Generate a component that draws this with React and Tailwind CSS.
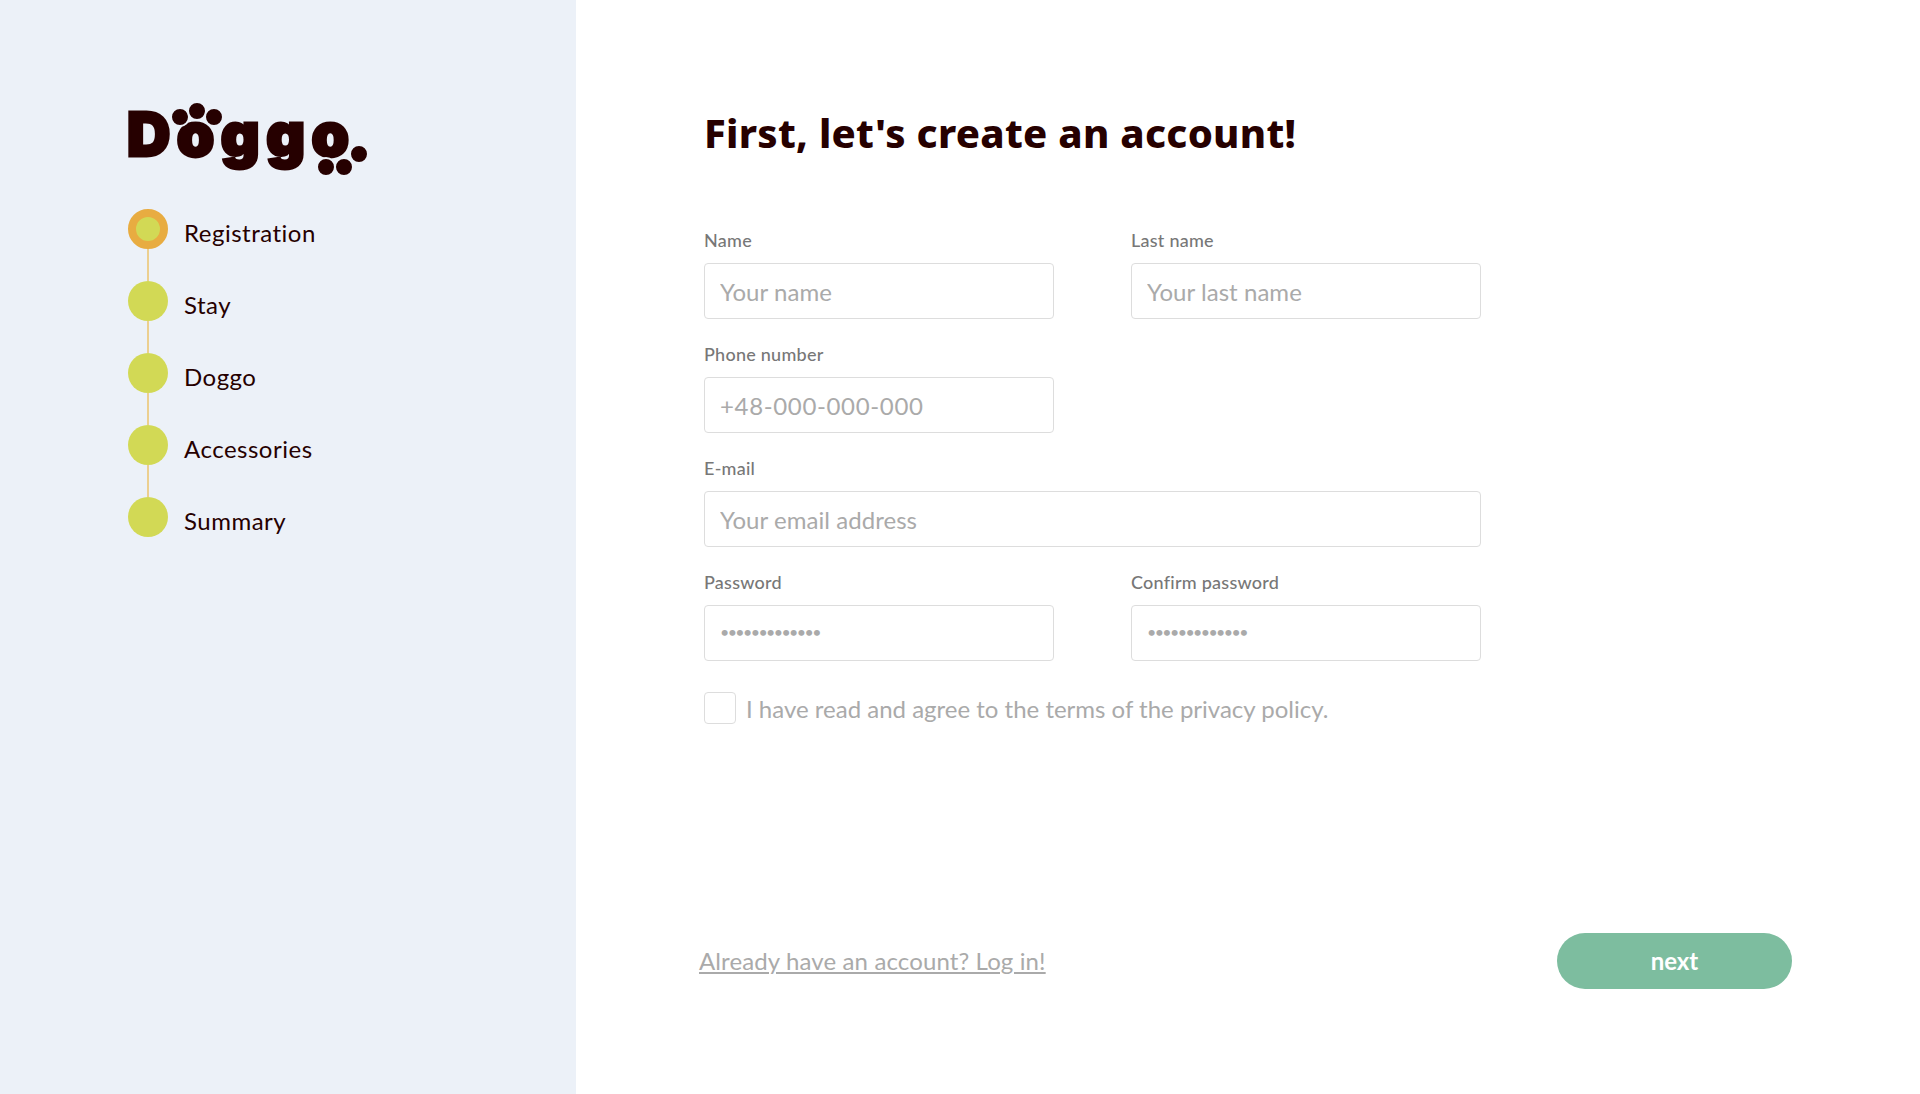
import React from "react";

const steps = ["Registration", "Stay", "Doggo", "Accessories", "Summary"];

const Logo = () => (
  <div className="relative h-[80px] w-[250px]">
    <span className="absolute left-[-1px] top-[-6px] font-['Inter',sans-serif] text-[60px] font-black leading-[80px] tracking-[6.5px] text-[#260000] [-webkit-text-stroke:3px_#260000]">
      Doggo
    </span>
    <svg className="absolute left-0 top-0" width="250" height="80" viewBox="0 0 250 80">
      <g fill="#260000" stroke="#ecf1f8" strokeWidth="2">
        <circle cx="52" cy="17" r="9" />
        <circle cx="69" cy="11" r="9" />
        <circle cx="86" cy="17" r="9" />
        <circle cx="231" cy="54" r="9" />
        <circle cx="198" cy="67" r="9" />
        <circle cx="216" cy="67" r="9" />
      </g>
    </svg>
  </div>
);

const Step = ({ label, active, last }) => (
  <div className="relative flex h-[72px] items-start gap-4">
    {!last && <div className="absolute left-[19px] top-[40px] h-[32px] w-[2px] bg-[#eccf8f]" />}
    <div
      className={
        active
          ? "h-10 w-10 rounded-full border-[8px] border-[#e8ac41] bg-[#d2d955]"
          : "h-10 w-10 rounded-full bg-[#d2d955]"
      }
    />
    <span className="mt-[6px] text-[24px] leading-[36px] tracking-[0.5px] text-[#260000]">{label}</span>
  </div>
);

const Field = ({ label, placeholder, type = "text", dots, phone }) => {
  let inputClass =
    "h-[56px] w-full rounded-[4px] border border-[#dddddd] bg-white px-[15px] text-[24px] tracking-[0.05px] outline-none placeholder:text-[#aaaaaa]";
  if (dots) {
    inputClass =
      "h-[56px] w-full rounded-[4px] border border-[#dddddd] bg-white px-[15px] pb-[4px] text-[16px] tracking-[-1.6px] outline-none placeholder:text-[#aaaaaa]";
  }
  if (phone) {
    inputClass =
      "h-[56px] w-full rounded-[4px] border border-[#dddddd] bg-white px-[15px] text-[24px] tracking-[0.65px] outline-none placeholder:text-[#aaaaaa]";
  }
  return (
    <label className="flex flex-col">
      <span className="mb-[11px] h-[24px] text-[18px] font-medium leading-[24px] tracking-[0.25px] text-[#777777]">
        {label}
      </span>
      <input type={type} placeholder={placeholder} className={inputClass} />
    </label>
  );
};

export default function App() {
  return (
    <div className="flex h-screen bg-white font-['Lato',sans-serif]">
      <aside className="w-[576px] shrink-0 bg-[#ecf1f8] pl-[128px] pt-[100px]">
        <Logo />
        <div className="mt-[29px]">
          {steps.map((s, i) => (
            <Step key={s} label={s} active={i === 0} last={i === steps.length - 1} />
          ))}
        </div>
      </aside>

      <main className="flex flex-1 flex-col pl-[128px] pr-[128px]">
        <h1 className="mt-[104px] font-['Noto_Sans',sans-serif] text-[40px] font-extrabold leading-[58px] tracking-[0.28px] text-[#260000]">
          First, let's create an account!
        </h1>

        <form className="mt-[66px] w-[777px]">
          <div className="grid grid-cols-2 gap-x-[77px] gap-y-[23px]">
            <Field label="Name" placeholder="Your name" />
            <Field label="Last name" placeholder="Your last name" />
            <Field label="Phone number" placeholder="+48-000-000-000" phone />
            <div />
            <div className="col-span-2">
              <Field label="E-mail" placeholder="Your email address" />
            </div>
            <Field label="Password" placeholder="•••••••••••••" dots />
            <Field label="Confirm password" placeholder="•••••••••••••" dots />
          </div>

          <label className="mt-[28px] flex items-center gap-[10px]">
            <input
              type="checkbox"
              className="h-8 w-8 appearance-none rounded-[4px] border border-[#dddddd] bg-white"
            />
            <span className="pt-[2px] text-[24px] leading-[36px] text-[#aaaaaa]">
              I have read and agree to the terms of the privacy policy.
            </span>
          </label>
        </form>

        <div className="mt-auto mb-[105px] flex items-center justify-between">
          <a href="#" className="ml-[-5px] text-[24px] tracking-[0.12px] text-[#aaaaaa] underline">
            Already have an account? Log in!
          </a>
          <button className="h-[56px] w-[235px] rounded-full bg-[#7dbd9f] text-[24px] font-bold text-white">
            next
          </button>
        </div>
      </main>
    </div>
  );
}
